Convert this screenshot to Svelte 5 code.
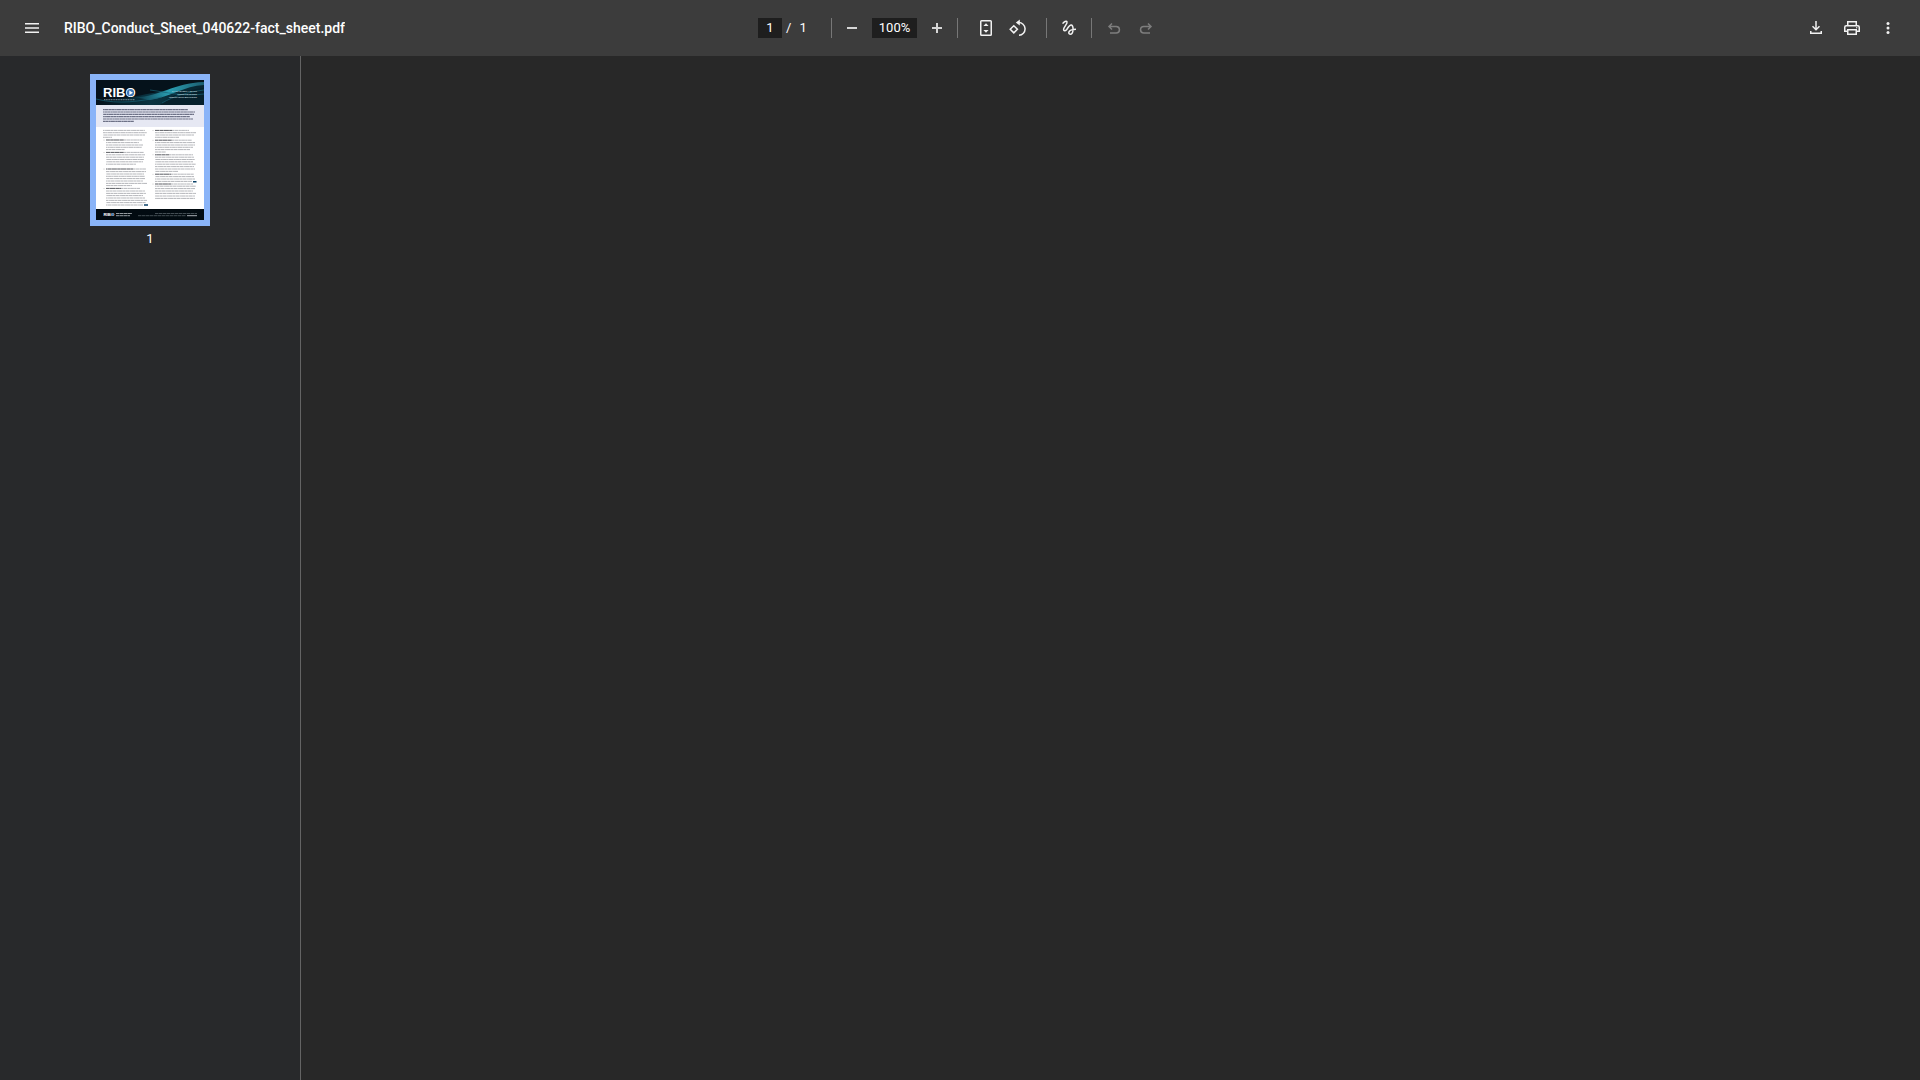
<script>
  // Each line of the page preview: [y, x start, x end]
  const intro = [
    [29.6, 7, 92], [32, 7, 99], [34.4, 7, 98], [36.6, 7, 94], [39, 7, 97], [41.4, 7, 38]
  ];
  const body = [
    [50.4, 7, 49], [52.7, 7, 51], [55, 7, 49], [57.3, 7, 16],
    [62.6, 10, 43], [65, 10, 47], [67.3, 10, 46], [69.6, 10, 29],
    [74.8, 10, 49], [77.2, 10, 48], [79.5, 10, 48], [81.8, 10, 47], [84.2, 10, 40],
    [91.6, 10, 50], [94, 10, 48], [96.3, 10, 49], [98.6, 10, 49], [101, 10, 47], [103.4, 10, 51], [105.6, 10, 36],
    [111, 10, 49], [113.4, 10, 50], [115.6, 10, 47], [118, 10, 49], [120.4, 10, 51], [122.6, 10, 50], [125, 10, 47],
    [52.7, 59, 100], [55, 59, 98], [57.3, 59, 83],
    [62.6, 59, 99], [65, 59, 99], [67.3, 59, 97], [69.6, 59, 94], [72, 59, 70],
    [77.2, 59, 98], [79.5, 59, 99], [81.8, 59, 97], [84.2, 59, 100], [86.6, 59, 98], [89, 59, 99], [91.4, 59, 82],
    [96.6, 59, 98], [99, 59, 99], [101.4, 59, 96],
    [106.2, 59, 100], [108.6, 59, 99], [111, 59, 97], [113.4, 59, 100], [116, 59, 99], [118.4, 59, 99]
  ];
  // Section openings: [y, x start, x end of the bold words, x end]
  const heads = [
    [60, 10, 28, 46], [72.4, 10, 28, 48], [89, 10, 37, 50], [108.4, 10, 25, 44],
    [50.4, 59, 76, 93], [60.2, 59, 76, 96], [74.8, 59, 73, 97], [94.2, 59, 75, 98], [104, 59, 75, 97]
  ];
  let page = $state('1');
  let zoom = $state('100%');
</script>

<div class="viewer">
  <header>
    <div class="start">
      <button aria-label="Menu"><svg viewBox="0 0 20 20"><path class="line" d="M3 5.75h14M3 10h14M3 14.25h14" /></svg></button>
      <h1>RIBO_Conduct_Sheet_040622-fact_sheet.pdf</h1>
    </div>
    <div class="center">
      <div class="pages">
        <input class="page" aria-label="Page number" bind:value={page} />
        <span>/</span><span class="total">1</span>
      </div>
      <i class="divider"></i>
      <div class="zoom">
        <button aria-label="Zoom out"><svg viewBox="0 0 20 20"><path class="line thick" d="M5 10h10" /></svg></button>
        <input class="percent" aria-label="Zoom level" bind:value={zoom} />
        <button aria-label="Zoom in"><svg viewBox="0 0 20 20"><path class="line thick" d="M5 10h10M10 5v10" /></svg></button>
      </div>
      <i class="divider"></i>
      <div class="fit">
        <button aria-label="Fit to page"><svg viewBox="0 0 20 20"><rect class="line" x="4.75" y="2.75" width="10.5" height="14.5" rx="0.8" /><path d="M10 5.2l2.6 2.8H7.4zM10 14.8l2.6-2.8H7.4z" /></svg></button>
        <button aria-label="Rotate counterclockwise"><svg viewBox="0 0 20 20"><path class="line" d="M5.8 7.7l3.6 3.6-3.6 3.6-3.6-3.6zM9.5 4.6h1a6.3 6.3 0 0 1 .5 12.6" /><path d="M11.8 1.6v6L7.8 4.6z" /></svg></button>
      </div>
      <i class="divider"></i>
      <div class="draw">
        <button aria-label="Draw"><svg viewBox="0 0 20 20"><path class="line" d="M3.6 5.6C5 3.7 7.4 2.6 8 3.9C8.700 5.7 4.6 9 4.6 11.4C4.6 13.2 6.4 13.2 7.5 11.8C9 9.8 10.4 6.6 12.3 7C14.8 7.6 14.7 16.2 11.3 16.3C9.7 16.3 9.4 14.7 10.2 13.5C11.4 11.7 14 11.3 17 11.3" /></svg></button>
      </div>
      <i class="divider"></i>
      <div class="draw">
        <button aria-label="Undo" disabled><svg viewBox="0 0 20 20"><path class="line" d="M8 5.5L5 8.5l3 3M5 8.5h7.2a3.2 3.2 0 0 1 0 6.500H6" /></svg></button>
        <button aria-label="Redo" disabled><svg viewBox="0 0 20 20"><path class="line" d="M12 5.5l3 3-3 3M15 8.5H7.8a3.2 3.2 0 0 0 0 6.500H14" /></svg></button>
      </div>
    </div>
    <div class="end">
      <button aria-label="Download"><svg viewBox="0 0 20 20"><path class="line" d="M10 3v8.5M6.5 8.3L10 11.8l3.5-3.5M4.75 13v2.25h10.5V13" /></svg></button>
      <button aria-label="Print"><svg viewBox="0 0 20 20"><path class="line" d="M5.75 7V3.75h8.5V7M5.75 13.25h-3V9.2q0-1.45 1.45-1.45h11.6q1.45 0 1.45 1.45v4.05h-3M5.75 11.75h8.5v4.5h-8.5z" /><circle cx="14.7" cy="9.8" r="0.7" /></svg></button>
      <button aria-label="More actions"><svg viewBox="0 0 20 20"><circle cx="10" cy="5.5" r="1.5" /><circle cx="10" cy="10" r="1.5" /><circle cx="10" cy="14.5" r="1.5" /></svg></button>
    </div>
  </header>
  <div class="content">
    <aside>
      <button class="thumbnail" aria-label="Page 1">
        <svg viewBox="0 0 108 140">
          <defs>
            <linearGradient id="sea"><stop offset="0" stop-color="#05121b" /><stop offset="0.5" stop-color="#0a3442" /><stop offset="1" stop-color="#062430" /></linearGradient>
            <linearGradient id="wave"><stop offset="0" stop-color="#0a3040" /><stop offset="0.5" stop-color="#2a9fb3" /><stop offset="1" stop-color="#1b5c6e" /></linearGradient>
          </defs>
          <path fill="#fff" d="M0 0h108v140H0z" />
          <path fill="#05121b" d="M0 0h108v25H0z" />
          <path fill="url(#sea)" d="M0 19C32 21 52 12 66 12S92 5 108 3v22H0z" />
          <path fill="url(#wave)" d="M38 17C62 18 76 3 108 2v3C88 6 74 17 54 20z" />
          <path fill="#06202c" d="M64 25C76 14 91 10 108 8v17z" />
          <path fill="none" stroke="#176276" stroke-width="0.7" d="M0 19c24 6 44 2 66-2M54 10c16 2 32 7 54 4M66 23c12-7 26-11 42-13" />
          <text class="logo" x="7" y="17.3" font-size="13">RIBO</text>
          <circle cx="34.5" cy="12.7" r="3.6" fill="#4178b8" /><path fill="#fff" d="M33.3 10.4l3.7 2.3-3.7 2.3z" />
          <path stroke="#c4d1d6" stroke-width="0.6" stroke-dasharray="1.2 0.5" d="M8 19.7h31" />
          <g class="caption" font-size="2.5" text-anchor="end"><text x="101" y="12.3">FACT SHEET ABOUT</text><text x="101" y="15.3">UNREGISTERED</text><text x="101" y="18.3">INSURANCE BROKERS</text></g>
          <path fill="#e6e8f3" d="M0 25h108v22H0z" />
          {#each intro as [y, from, to]}
            <path stroke="#6d7186" stroke-width="1.1" stroke-dasharray="3.1 0.3 1.7 0.2 4.3 0.3 2.6 0.2" stroke-dashoffset={y * 7} d="M{from} {y}H{to}" />
          {/each}
          {#each body as [y, from, to]}
            <path stroke="#b4b6ba" stroke-width="1" stroke-dasharray="2.3 0.3 3.7 0.3 1.3 0.2 4.6 0.3" stroke-dashoffset={y * 5} d="M{from} {y}H{to}" />
          {/each}
          {#each heads as [y, from, mid, to]}
            <path stroke="#b4b6ba" stroke-width="1" stroke-dasharray="2.3 0.3 3.7 0.3" d="M{mid} {y}H{to}" />
            <path stroke="#5c5e64" stroke-width="1" stroke-dasharray="5.3 0.3 3.6 0.2" stroke-dashoffset={y * 3} d="M{from} {y}H{mid}" />
            <circle cx={from - 2} cy={y} r="0.4" fill="#777" />
          {/each}
          <path fill="#0b4268" d="M48 124.3h4v1.400h-4zM97 101h3.5v1.400H97z" />
          <path fill="#020b11" d="M0 129h108v11H0z" />
          <text class="logo" x="7.5" y="136" font-size="4.3">RIBO</text>
          <circle cx="16.7" cy="134.500" r="1.2" fill="#4178b8" />
          <path stroke="#bcc2c5" stroke-width="0.8" stroke-dasharray="3.5 0.3" d="M20 133.5h16M20 135.7h14" />
          <path stroke="#606a70" stroke-width="0.7" stroke-dasharray="3.5 0.5" d="M59 133.5h42M42 135.7h48" />
          <path stroke="#d3d8dc" stroke-width="0.8" d="M91 135.7h10" />
        </svg>
      </button>
      <span class="label">1</span>
    </aside>
    <main></main>
  </div>
</div>

<style>
  :global(body) { margin: 0; }
  .viewer { min-height: 100vh; display: flex; flex-direction: column; background: #282828; color: #fff; font: 13px/20px Roboto, sans-serif; }
  header { height: 56px; box-sizing: border-box; padding: 0 16px; display: grid; grid-template-columns: 1fr auto 1fr; align-items: center; background: #3c3c3c; }
  .start, .center, .end, .pages, .zoom, .fit, .draw { display: flex; align-items: center; }
  .start { gap: 16px; min-width: 0; }
  .end { gap: 4px; justify-content: flex-end; }
  h1 { margin: 0; font-size: 14px; font-weight: 500; white-space: nowrap; overflow: hidden; text-overflow: ellipsis; }
  button { width: 32px; height: 32px; padding: 0; border: 0; background: none; color: #f1f1f1; display: grid; place-items: center; flex: none; }
  button:disabled { color: #7d7d7d; }
  header svg { width: 20px; height: 20px; fill: currentColor; }
  .line { fill: none; stroke: currentColor; stroke-width: 1.5; }
  .thick { stroke: #d6d6d6; stroke-width: 2; }
  input { height: 20px; box-sizing: border-box; border: 0; padding: 0; background: #1e1e1e; color: #fff; font: inherit; text-align: center; }
  .page { width: 24px; }
  .percent { width: 45px; }
  .pages { width: 73px; }
  .pages span { margin-left: 4px; }
  .pages .total { margin-left: 8px; }
  .zoom { gap: 4px; padding: 0 4px; }
  .fit { padding: 0 12px; }
  .draw { padding: 0 6px; }
  .draw:last-child { padding-right: 0; }
  .divider { width: 1px; height: 20px; background: #777; }
  .content { flex: 1; display: flex; }
  aside { width: 300px; flex: none; padding-top: 18px; border-right: 1px solid #646464; background: #28292b; display: flex; flex-direction: column; align-items: center; gap: 3px; }
  main { flex: 1; }
  .thumbnail { width: 120px; height: auto; border: 6px solid #8ab4f8; background: #fff; }
  .thumbnail svg { display: block; width: 100%; }
  .logo { font-family: "Liberation Sans", sans-serif; font-weight: 700; fill: #fff; }
  .caption { font-family: "Liberation Sans", sans-serif; font-weight: 700; fill: #bcd0d6; }
</style>
